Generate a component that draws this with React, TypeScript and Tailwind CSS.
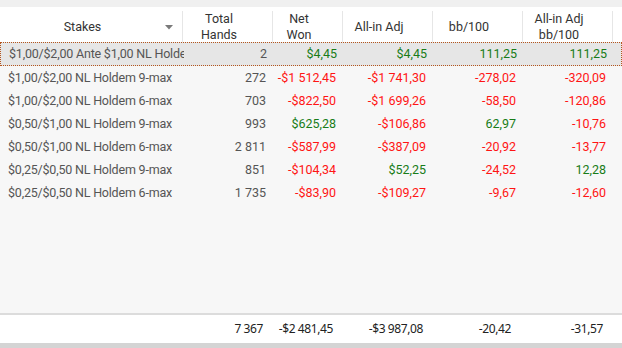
import React from "react";

type Row = { stake: string; hands: string; net: string; adj: string; bb: string; adjbb: string };

const rows: Row[] = [
  { stake: "$1,00/$2,00 Ante $1,00 NL Holdem 9-max", hands: "2", net: "$4,45", adj: "$4,45", bb: "111,25", adjbb: "111,25" },
  { stake: "$1,00/$2,00 NL Holdem 9-max", hands: "272", net: "-$1 512,45", adj: "-$1 741,30", bb: "-278,02", adjbb: "-320,09" },
  { stake: "$1,00/$2,00 NL Holdem 6-max", hands: "703", net: "-$822,50", adj: "-$1 699,26", bb: "-58,50", adjbb: "-120,86" },
  { stake: "$0,50/$1,00 NL Holdem 9-max", hands: "993", net: "$625,28", adj: "-$106,86", bb: "62,97", adjbb: "-10,76" },
  { stake: "$0,50/$1,00 NL Holdem 6-max", hands: "2 811", net: "-$587,99", adj: "-$387,09", bb: "-20,92", adjbb: "-13,77" },
  { stake: "$0,25/$0,50 NL Holdem 9-max", hands: "851", net: "-$104,34", adj: "$52,25", bb: "-24,52", adjbb: "12,28" },
  { stake: "$0,25/$0,50 NL Holdem 6-max", hands: "1 735", net: "-$83,90", adj: "-$109,27", bb: "-9,67", adjbb: "-12,60" },
];

const color = (v: string) => (v.startsWith("-") ? "text-[#ff1414]" : "text-[#187c18]");

const gridCols = "grid grid-cols-[183px_90px_70px_90px_90px_90px_1fr]";

function HeaderCell({ children, arrow }: { children: React.ReactNode; arrow?: boolean }) {
  return (
    <div className="pt-[4px] pb-[2px] h-full">
      <div className="relative h-full border-r border-[#e6e6e6] flex items-center justify-center pr-[17px] text-center leading-[16px]">
        {children}
        {arrow && (
          <svg className="absolute right-[9px] top-[14px]" width="8" height="5" viewBox="0 0 8 5">
            <polygon points="0,0 8,0 4,4.5" fill="#7a7a7a" />
          </svg>
        )}
      </div>
    </div>
  );
}

export default function App() {
  return (
    <div
      className="w-[622px] h-[348px] bg-[#f0f0f0] flex flex-col overflow-hidden text-[12px]"
      style={{ fontFamily: 'Roboto, "Liberation Sans", sans-serif' }}
    >
      <div className="h-[7px] shrink-0" />
      <div className={`${gridCols} h-[35px] bg-white text-[#333] text-[12.5px] shrink-0`}>
        <HeaderCell arrow>Stakes</HeaderCell>
        <HeaderCell>
          Total
          <br />
          Hands
        </HeaderCell>
        <HeaderCell>
          Net
          <br />
          Won
        </HeaderCell>
        <HeaderCell>All-in Adj</HeaderCell>
        <HeaderCell>bb/100</HeaderCell>
        <HeaderCell>
          All-in Adj
          <br />
          bb/100
        </HeaderCell>
        <div />
      </div>
      <div className="flex-1 bg-[#f7f7f7] flex flex-col">
        {rows.map((r, i) => (
          <div
            key={i}
            className={`${gridCols} items-center text-[#555] text-[12.5px] ${
              i === 0 ? "bg-[#e6e6e6] border border-dotted border-[#b4561e] h-[24px] pt-[1px]" : "h-[23px] pt-[2px]"
            }`}
          >
            <div className="pl-[8px] whitespace-nowrap overflow-hidden tracking-[-0.2px]">{r.stake}</div>
            <div className="text-right pr-[7px]">{r.hands}</div>
            <div className={`text-right pr-[7px] whitespace-nowrap ${color(r.net)}`}>{r.net}</div>
            <div className={`text-right pr-[7px] whitespace-nowrap ${color(r.adj)}`}>{r.adj}</div>
            <div className={`text-right pr-[7px] ${color(r.bb)}`}>{r.bb}</div>
            <div className={`text-right pr-[7px] ${color(r.adjbb)}`}>{r.adjbb}</div>
            <div />
          </div>
        ))}
      </div>
      <div
        className={`${gridCols} h-[30px] bg-white border-t-2 border-[#dcdcdc] items-center text-[#222] text-[12px] tracking-[-0.4px] shrink-0`}
        style={{ fontFamily: '"Noto Sans", sans-serif' }}
      >
        <div />
        <div className="text-right pr-[10px]">7 367</div>
        <div className="text-right pr-[10px] whitespace-nowrap">-$2 481,45</div>
        <div className="text-right pr-[10px] whitespace-nowrap">-$3 987,08</div>
        <div className="text-right pr-[12px]">-20,42</div>
        <div className="text-right pr-[10px]">-31,57</div>
        <div />
      </div>
      <div className="h-[5px] bg-[#d4d4d4] shrink-0" />
    </div>
  );
}
